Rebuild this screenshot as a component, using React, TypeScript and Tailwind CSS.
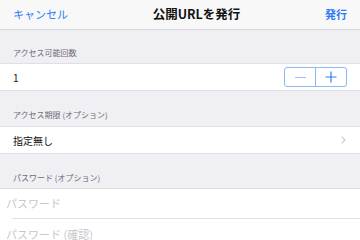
import React from 'react'

const font = { fontFamily: '"Noto Sans CJK JP", "Noto Sans", sans-serif' }

function SectionHeader({ label, className }: { label: string; className: string }) {
  return (
    <div className={`flex items-end px-[13px] ${className}`}>
      <span className="text-[8px] leading-[10px] text-[#6d6d72]">{label}</span>
    </div>
  )
}

function Stepper() {
  return (
    <div className="flex h-[20px] w-[63px] rounded-[3px] border border-[#8cb8f7]">
      <button className="flex flex-1 items-center justify-center border-r border-[#8cb8f7]">
        <span className="block h-px w-[11px] bg-[#9cc2f8]" />
      </button>
      <button className="flex flex-1 items-center justify-center">
        <svg width="12" height="12" viewBox="0 0 12 12">
          <path d="M6 0.5v11M0.5 6h11" stroke="#2d7cf6" strokeWidth="1.2" />
        </svg>
      </button>
    </div>
  )
}

export default function App() {
  return (
    <div className="h-[240px] w-[360px] overflow-hidden bg-[#efeff4]" style={font}>
      <div className="flex h-[30px] items-center justify-between border-b border-[#d8d8dc] bg-[#f8f8f8] px-[13px]">
        <span className="text-[11px] text-[#2d7cf6]">キャンセル</span>
        <span className="text-[12.5px] font-bold text-[#111]">公開URLを発行</span>
        <span className="text-[11px] font-bold text-[#2d7cf6]">発行</span>
      </div>

      <SectionHeader label="アクセス可能回数" className="h-[33px] pb-[5px]" />
      <div className="flex h-[28px] items-center justify-between border-y border-[#e0e0e4] bg-white pl-[13px] pr-[13px]">
        <span className="text-[10px] text-[#111]">1</span>
        <Stepper />
      </div>

      <SectionHeader label="アクセス期限 (オプション)" className="h-[35px] pb-[6px]" />
      <div className="flex h-[28px] items-center justify-between border-y border-[#e0e0e4] bg-white pl-[13px] pr-[14px]">
        <span className="text-[10px] text-[#111]">指定無し</span>
        <svg width="5" height="8" viewBox="0 0 5 8">
          <path d="M0.7 0.7L4 4L0.7 7.3" fill="none" stroke="#c7c7cc" strokeWidth="1.1" />
        </svg>
      </div>

      <SectionHeader label="パスワード (オプション)" className="h-[34px] pb-[5px]" />
      <div className="border-t border-[#e0e0e4] bg-white">
        <div className="flex h-[29px] items-center pl-[6px]">
          <span className="text-[11px] text-[#c7c7cd]">パスワード</span>
        </div>
        <div className="ml-[12px] h-px bg-[#e0e0e4]" />
        <div className="flex h-[30px] items-center pl-[6px]">
          <span className="text-[11px] text-[#c7c7cd]">パスワード (確認)</span>
        </div>
      </div>
    </div>
  )
}
